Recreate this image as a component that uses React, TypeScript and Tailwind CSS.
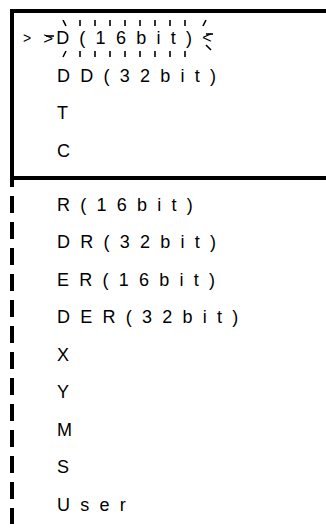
import type { ReactNode } from 'react';

const boxItems = ['DD(32bit)', 'T', 'C'];
const listItems = ['R(16bit)', 'DR(32bit)', 'ER(16bit)', 'DER(32bit)', 'X', 'Y', 'M', 'S', 'User'];

function Row({ children }: { children: ReactNode }) {
  return (
    <div className="relative flex h-[37.5px] items-center pl-[43px] text-[18px] leading-none tracking-[10.25px] text-black">
      {children}
    </div>
  );
}

// sparkle + tick marks drawn around the selected entry (coords relative to the row)
function Sparkle() {
  const ticks = [66, 81, 96, 111, 126, 141, 156, 171];
  return (
    <svg className="pointer-events-none absolute left-0 top-0" width="240" height="38" viewBox="0 0 240 38">
      <g stroke="#000" strokeWidth="1.6" fill="none">
        {ticks.map((x) => (
          <line key={`t${x}`} x1={x} y1={0} x2={x} y2={6} />
        ))}
        {ticks.map((x) => (
          <line key={`b${x}`} x1={x} y1={31} x2={x} y2={37} />
        ))}
        <line x1={49} y1={0} x2={52} y2={6} />
        <line x1={52} y1={31} x2={49} y2={37} />
        <line x1={32} y1={16} x2={40} y2={16} />
        <line x1={189} y1={6} x2={192} y2={0} />
        <line x1={192} y1={14} x2={199} y2={14} />
        <line x1={192} y1={25} x2={197} y2={30} />
      </g>
    </svg>
  );
}

export default function App() {
  return (
    <div className="h-[528px] w-[326px] overflow-hidden bg-white pl-[10px] pt-[9px] font-['Liberation_Sans',Arial,sans-serif]">
      <div className="border-y-4 border-l-4 border-black py-[6.5px]">
        <div className="relative flex h-[37.5px] items-center leading-none text-black">
          <Sparkle />
          <span className="ml-[9px] text-[14px]">&gt;</span>
          <span className="ml-[12px] text-[17px]">&gt;</span>
          <span className="ml-[3px] text-[18px] tracking-[10.25px]">D(16bit)</span>
          <span className="text-[16px]">&lt;</span>
        </div>
        {boxItems.map((item) => (
          <Row key={item}>{item}</Row>
        ))}
      </div>
      <div className="bg-[repeating-linear-gradient(to_bottom,#000_-10px,#000_7px,transparent_7px,transparent_16px)] bg-[length:4px_100%] bg-no-repeat pl-[4px] pt-[6px]">
        {listItems.map((item) => (
          <Row key={item}>{item}</Row>
        ))}
      </div>
    </div>
  );
}
